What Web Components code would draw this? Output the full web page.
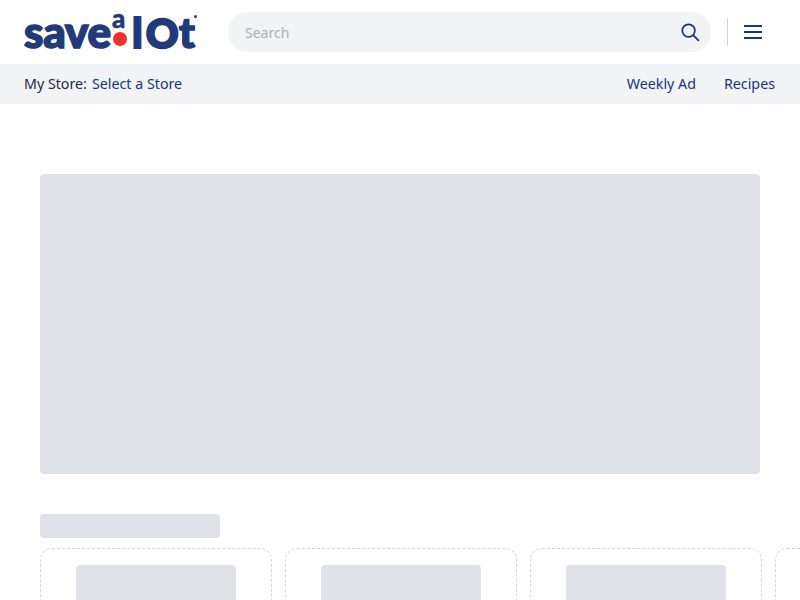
<!DOCTYPE html>
<html>
<head>
<meta charset="utf-8">
<title>Save A Lot</title>
<style>
  html, body { margin: 0; padding: 0; height: 100%; overflow: hidden; background: #fff; }
  body { font-family: "Noto Sans", "Open Sans", sans-serif; }
</style>
</head>
<body>
<site-header></site-header>
<store-bar>
  <store-link slot="start" plain>My Store:</store-link>
  <store-link slot="start">Select a Store</store-link>
  <store-link slot="end">Weekly Ad</store-link>
  <store-link slot="end">Recipes</store-link>
</store-bar>
<home-skeleton></home-skeleton>

<script>
customElements.define('brand-logo',
class extends HTMLElement {
  constructor(){super();
    this.attachShadow({mode:'open'});
    this.shadowRoot.innerHTML = `
    <style>
      :host{
        display:block;
        flex:none;
        width:173px;
        height:34px;
        position:relative;
        font-family:"Lato",sans-serif;
        font-weight:900;
        color:#223a7a;
        line-height:40px;
        -webkit-text-stroke:1.6px #223a7a;
      }
      span{position:absolute;white-space:nowrap;transform-origin:0 0;}
      .save{left:0;top:-4px;font-size:44px;letter-spacing:-.2px;}
      .a{left:88px;top:-17px;font-size:26px;-webkit-text-stroke:.5px #223a7a;}
      .dot{left:89px;top:17px;width:14px;height:14px;border-radius:50%;background:#ee2f2b;}
      .l{left:108px;top:-3px;font-size:42px;-webkit-text-stroke:2px #223a7a;}
      .o{left:122px;top:-2px;font-size:40px;-webkit-text-stroke:2.4px #223a7a;}
      .t{left:155px;top:-3px;font-size:42px;}
      .r{left:170px;top:0;width:3px;height:3px;border-radius:50%;background:#223a7a;}
    </style>
    <span class="save">save</span><span class="a">a</span><span class="dot"></span><span class="l">l</span><span class="o">O</span><span class="t">t</span><span class="r"></span>
    `;
  }
})

customElements.define('search-box',
class extends HTMLElement {
  constructor(){super();
    this.attachShadow({mode:'open'});
    this.shadowRoot.innerHTML = `
    <style>
      :host{
        display:flex;
        align-items:center;
        justify-content:space-between;
        box-sizing:border-box;
        flex:none;
        width:483px;
        height:40px;
        padding:0 11px 0 17px;
        border-radius:20px;
        background:#f1f3f5;
      }
      span{font-size:14px;color:#a9b1bd;}
      svg{display:block;width:20px;height:20px;}
    </style>
    <span>Search</span>
    <svg viewBox="0 0 20 20" fill="none" stroke="#17357f" stroke-width="1.7" stroke-linecap="round">
      <circle cx="8.6" cy="8.6" r="6.3"/>
      <path d="M13.2 13.2l5.2 5.2"/>
    </svg>
    `;
  }
})

customElements.define('site-header',
class extends HTMLElement {
  constructor(){super();
    this.attachShadow({mode:'open'});
    this.shadowRoot.innerHTML = `
    <style>
      :host{
        display:flex;
        align-items:center;
        box-sizing:border-box;
        height:64px;
        padding:0 37px 0 24px;
      }
      search-box{margin-left:31px;}
      .sep{width:1px;height:28px;background:#cfd3d8;margin-left:16px;}
      .menu{display:flex;flex-direction:column;gap:4px;width:18px;margin-left:16px;}
      .menu i{display:block;height:2px;background:#17357f;}
    </style>
    <brand-logo></brand-logo>
    <search-box></search-box>
    <div class="sep"></div>
    <div class="menu"><i></i><i></i><i></i></div>
    `;
  }
})

customElements.define('store-link',
class extends HTMLElement {
  constructor(){super();
    this.attachShadow({mode:'open'});
    this.shadowRoot.innerHTML = `
    <style>
      :host{display:inline-block;font-size:14.25px;line-height:20px;color:#17357f;}
      :host([plain]){color:#212b36;}
    </style>
    <slot></slot>
    `;
  }
})

customElements.define('store-bar',
class extends HTMLElement {
  constructor(){super();
    this.attachShadow({mode:'open'});
    this.shadowRoot.innerHTML = `
    <style>
      :host{
        display:flex;
        align-items:center;
        justify-content:space-between;
        box-sizing:border-box;
        height:40px;
        padding:0 25px 0 24px;
        background:#f1f3f7;
      }
      .start{display:flex;gap:5px;}
      .end{display:flex;gap:28px;}
    </style>
    <div class="start"><slot name="start"></slot></div>
    <div class="end"><slot name="end"></slot></div>
    `;
  }
})

customElements.define('skeleton-card',
class extends HTMLElement {
  constructor(){super();
    this.attachShadow({mode:'open'});
    this.shadowRoot.innerHTML = `
    <style>
      :host{
        display:block;
        flex:0 0 232px;
        box-sizing:border-box;
        height:240px;
        padding:16px 35px;
        border:1px dashed #d4d7db;
        border-radius:12px;
      }
      div{width:160px;height:160px;border-radius:4px;background:#dfe2e6;}
    </style>
    <div></div>
    `;
  }
})

customElements.define('home-skeleton',
class extends HTMLElement {
  constructor(){super();
    this.attachShadow({mode:'open'});
    this.shadowRoot.innerHTML = `
    <style>
      :host{display:block;height:496px;overflow:hidden;box-sizing:border-box;padding:70px 0 0 40px;}
      .hero{width:720px;height:300px;border-radius:4px;background:#dfe2e6;}
      .title{width:180px;height:24px;margin-top:40px;border-radius:4px;background:#dfe2e6;}
      .row{display:flex;gap:13px;margin-top:10px;}
    </style>
    <div class="hero"></div>
    <div class="title"></div>
    <div class="row">
      <skeleton-card></skeleton-card>
      <skeleton-card></skeleton-card>
      <skeleton-card></skeleton-card>
      <skeleton-card></skeleton-card>
    </div>
    `;
  }
})
</script>
</body>
</html>
